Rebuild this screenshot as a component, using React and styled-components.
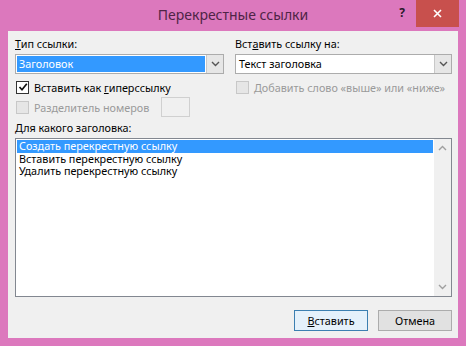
import React from "react";
import styled, { createGlobalStyle } from "styled-components";

const Global = createGlobalStyle`
  html, body { margin: 0; padding: 0; background: #dc78bd; }
  body { font-family: "Noto Sans", "Open Sans", sans-serif; }
`;

const Frame = styled.div`
  width: 466px;
  height: 346px;
  box-sizing: border-box;
  background: #dc78bd;
  padding: 0 8px 8px 8px;
  display: flex;
  flex-direction: column;
  font-size: 10.8px;
  color: #000;
`;

const TitleBar = styled.div`
  height: 31px;
  display: flex;
  align-items: flex-start;
`;

const Title = styled.div`
  flex: 1;
  text-align: center;
  font-size: 14px;
  line-height: 30px;
  color: #4f2446;
  padding-left: 66px;
`;

const Help = styled.div`
  width: 20px;
  font-size: 12px;
  font-weight: bold;
  line-height: 26px;
  color: #2a1a2a;
  text-align: center;
  margin-right: 4px;
`;

const Close = styled.div`
  width: 43px;
  height: 27px;
  background: #c8504d;
  display: flex;
  align-items: center;
  justify-content: center;
  margin-right: -1px;
`;

const Body = styled.div`
  flex: 1;
  background: #f0f0f0;
  padding: 5px 6px 7px 7px;
  display: flex;
  flex-direction: column;
`;

const Columns = styled.div`
  display: grid;
  grid-template-columns: 209px 1fr;
  column-gap: 11px;
  margin-bottom: 3px;
`;

const Col = styled.div`
  display: flex;
  flex-direction: column;
`;

const Label = styled.div`
  height: 16px;
  line-height: 16px;
  margin-bottom: 2px;
`;

const Combo = styled.div`
  height: 20px;
  box-sizing: border-box;
  border: 1px solid #acacac;
  background: #fff;
  display: flex;
  align-items: stretch;
  margin-bottom: 3px;
`;

const ComboText = styled.div`
  flex: 1;
  margin: 1px;
  padding-left: 2px;
  line-height: 16px;
  background: ${(p) => (p.selected ? "#3399ff" : "transparent")};
  color: ${(p) => (p.selected ? "#fff" : "#000")};
`;

const ComboButton = styled.div`
  width: 16px;
  background: #e6e6e6;
  border-left: 1px solid #c8c8c8;
  display: flex;
  align-items: center;
  justify-content: center;
`;

const CheckRow = styled.div`
  height: 20px;
  display: flex;
  align-items: center;
  gap: 5px;
  padding-left: 1px;
  white-space: nowrap;
  color: ${(p) => (p.disabled ? "#9a9a9a" : "#000")};
`;

const Box = styled.div`
  width: 11px;
  height: 11px;
  flex: none;
  border: 1px solid ${(p) => (p.disabled ? "#c8c8c8" : "#333")};
  background: ${(p) => (p.disabled ? "#e6e6e6" : "#fff")};
  display: flex;
  align-items: center;
  justify-content: center;
`;

const SmallInput = styled.div`
  width: 27px;
  height: 18px;
  border: 1px solid #d0d0d0;
  background: #f0f0f0;
  margin-left: 7px;
`;

const List = styled.div`
  height: 159px;
  box-sizing: border-box;
  border: 1px solid #828790;
  background: #fff;
  display: flex;
`;

const Items = styled.div`
  flex: 1;
  padding: 1px;
`;

const Item = styled.div`
  height: 12.5px;
  line-height: 12.5px;
  padding-left: 2px;
  background: ${(p) => (p.selected ? "#3399ff" : "transparent")};
  color: ${(p) => (p.selected ? "#fff" : "#000")};
`;

const Scroll = styled.div`
  width: 17px;
  background: #f0f0f0;
  display: flex;
  flex-direction: column;
  justify-content: space-between;
  align-items: center;
  padding: 6px 0;
`;

const Buttons = styled.div`
  margin-top: auto;
  display: flex;
  justify-content: flex-end;
  gap: 10px;
`;

const Button = styled.div`
  width: 74px;
  height: 21px;
  box-sizing: border-box;
  border: 1px solid ${(p) => (p.primary ? "#3c7fb1" : "#acacac")};
  background: ${(p) => (p.primary ? "#e5f1fb" : "#e1e1e1")};
  display: flex;
  align-items: center;
  justify-content: center;
`;

const Chevron = ({ up, color = "#555" }) => (
  <svg width="9" height="6" viewBox="0 0 9 6">
    <path
      d={up ? "M1 5 L4.5 1.5 L8 5" : "M1 1 L4.5 4.5 L8 1"}
      fill="none"
      stroke={color}
      strokeWidth="1.4"
    />
  </svg>
);

const Check = () => (
  <svg width="10" height="10" viewBox="0 0 10 10">
    <path d="M1.5 5 L4 7.8 L8.8 1.8" fill="none" stroke="#111" strokeWidth="1.7" />
  </svg>
);

const App = () => (
  <>
    <Global />
    <Frame>
      <TitleBar>
        <Title>Перекрестные ссылки</Title>
        <Help>?</Help>
        <Close>
          <svg width="9" height="9" viewBox="0 0 9 9">
            <path d="M1 1 L8 8 M8 1 L1 8" stroke="#fff" strokeWidth="1.6" />
          </svg>
        </Close>
      </TitleBar>
      <Body>
        <Columns>
          <Col>
            <Label>
              <u>Т</u>ип ссылки:
            </Label>
            <Combo>
              <ComboText selected>Заголовок</ComboText>
              <ComboButton>
                <Chevron />
              </ComboButton>
            </Combo>
            <CheckRow>
              <Box>
                <Check />
              </Box>
              <span>
                Вставить как <u>г</u>иперссылку
              </span>
            </CheckRow>
            <CheckRow disabled>
              <Box disabled />
              <span>Разделитель номеров</span>
              <SmallInput />
            </CheckRow>
          </Col>
          <Col>
            <Label>
              Вст<u>а</u>вить ссылку на:
            </Label>
            <Combo>
              <ComboText>Текст заголовка</ComboText>
              <ComboButton>
                <Chevron />
              </ComboButton>
            </Combo>
            <CheckRow disabled>
              <Box disabled />
              <span>Добавить слово «выше» или «ниже»</span>
            </CheckRow>
          </Col>
        </Columns>
        <Label>
          <u>Д</u>ля какого заголовка:
        </Label>
        <List>
          <Items>
            <Item selected>Создать перекрестную ссылку</Item>
            <Item>Вставить перекрестную ссылку</Item>
            <Item>Удалить перекрестную ссылку</Item>
          </Items>
          <Scroll>
            <Chevron up color="#a0a0a0" />
            <Chevron color="#a0a0a0" />
          </Scroll>
        </List>
        <Buttons>
          <Button primary>
            <span>
              <u>В</u>ставить
            </span>
          </Button>
          <Button>Отмена</Button>
        </Buttons>
      </Body>
    </Frame>
  </>
);

export default App;
